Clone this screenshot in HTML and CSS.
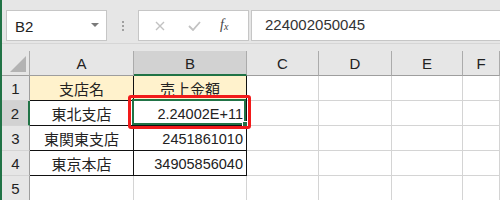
FILE: index.html
```html
<!DOCTYPE html>
<html lang="ja">
<head>
    <meta charset="UTF-8">
    <title>売上金額</title>
    <link rel="stylesheet" href="styles.css">
</head>
<body>
    <div class="app">
        <div class="toolbar">
            <div class="name-box">
                <span>B2</span>
                <span class="caret"></span>
            </div>
            <div class="grip">
                <span></span><span></span><span></span>
            </div>
            <div class="fx-buttons">
                <svg class="btn-icon" width="10" height="10" viewBox="0 0 10 10">
                    <path d="M1 1 L9 9 M9 1 L1 9" stroke="#c2c2c2" stroke-width="1.4" fill="none"/>
                </svg>
                <svg class="btn-icon" width="13" height="10" viewBox="0 0 13 10">
                    <path d="M1 5 L5 9 L12 1" stroke="#c2c2c2" stroke-width="1.8" fill="none"/>
                </svg>
                <span class="fx">f<sub>x</sub></span>
            </div>
            <div class="formula">224002050045</div>
        </div>
        <div class="spacer"></div>

        <div class="sheet">
            <div class="hd corner"><span class="tri"></span></div>
            <div class="hd col">A</div>
            <div class="hd col sel-col">B</div>
            <div class="hd col">C</div>
            <div class="hd col">D</div>
            <div class="hd col">E</div>
            <div class="hd col">F</div>

            <div class="hd row">1</div>
            <div class="cell tb head-cell">支店名</div>
            <div class="cell tb tb-r head-cell">売上金額</div>
            <div class="cell"></div><div class="cell"></div><div class="cell"></div><div class="cell"></div>

            <div class="hd row sel-row">2</div>
            <div class="cell tb">東北支店</div>
            <div class="cell tb tb-r num active">
                2.24002E+11
                <span class="selection"><span class="handle"></span></span>
                <span class="callout"></span>
            </div>
            <div class="cell"></div><div class="cell"></div><div class="cell"></div><div class="cell"></div>

            <div class="hd row">3</div>
            <div class="cell tb">東関東支店</div>
            <div class="cell tb tb-r num">2451861010</div>
            <div class="cell"></div><div class="cell"></div><div class="cell"></div><div class="cell"></div>

            <div class="hd row">4</div>
            <div class="cell tb">東京本店</div>
            <div class="cell tb tb-r num">34905856040</div>
            <div class="cell"></div><div class="cell"></div><div class="cell"></div><div class="cell"></div>

            <div class="hd row">5</div>
            <div class="cell"></div><div class="cell"></div><div class="cell"></div>
            <div class="cell"></div><div class="cell"></div><div class="cell"></div>
        </div>
    </div>
</body>
</html>
```

FILE: styles.css
```css
* {
    box-sizing: border-box;
}

body {
    margin: 0;
    padding: 0;
    font-family: "Liberation Sans", "Noto Sans CJK JP", sans-serif;
    color: #222;
    overflow: hidden;
}

.app {
    width: 500px;
    height: 200px;
    background: #e6e6e6;
    border-left: 2px solid #217346;
    overflow: hidden;
}

/* Formula bar */
.toolbar {
    height: 44px;
    display: flex;
    align-items: flex-start;
    padding: 10px 0 0 4px;
    border-bottom: 1px solid #d6d6d6;
}

.name-box {
    width: 101px;
    height: 31px;
    background: #fff;
    border: 1px solid #c6c6c6;
    display: flex;
    align-items: center;
    justify-content: space-between;
    padding: 2px 7px 0 8px;
    font-size: 15px;
}

.caret {
    width: 0;
    height: 0;
    border-left: 4px solid transparent;
    border-right: 4px solid transparent;
    border-top: 4px solid #7a7a7a;
    margin-top: -3px;
}

.grip {
    width: 31px;
    height: 31px;
    display: flex;
    flex-direction: column;
    align-items: center;
    justify-content: center;
    gap: 2px;
}

.grip span {
    width: 2px;
    height: 2px;
    background: #a0a0a0;
}

.fx-buttons {
    width: 111px;
    height: 31px;
    background: #fff;
    border: 1px solid #c6c6c6;
    display: flex;
    align-items: center;
    padding: 1px 0 0 16px;
}

.btn-icon {
    display: block;
}

.btn-icon + .btn-icon {
    margin-left: 23px;
}

.fx {
    margin-left: 19px;
    font-family: "Liberation Serif", serif;
    font-style: italic;
    font-size: 14px;
    color: #444;
    margin-top: -2px;
}

.fx sub {
    font-size: 10px;
    vertical-align: -1px;
}

.formula {
    flex: 1;
    margin-left: 2px;
    height: 31px;
    background: #fff;
    border: 1px solid #c6c6c6;
    border-right: none;
    padding: 5px 0 0 13px;
    font-size: 15px;
    color: #333;
}

.spacer {
    height: 7px;
}

/* Sheet grid */
.sheet {
    display: grid;
    grid-template-columns: 28px 104px 113px 72px 73px 71px 1fr;
    grid-auto-rows: 25px;
    background: #fff;
}

.hd {
    background: #e6e6e6;
    display: flex;
    align-items: center;
    justify-content: center;
    font-size: 15px;
    color: #222;
    border-right: 1px solid #ababab;
    border-bottom: 1px solid #d4d4d4;
}

.hd.col {
    border-bottom: 1px solid #9e9e9e;
    padding-top: 1px;
}

.hd.corner {
    position: relative;
    border-bottom: 1px solid #9e9e9e;
}

.tri {
    position: absolute;
    right: 3px;
    bottom: 3px;
    width: 0;
    height: 0;
    border-left: 16px solid transparent;
    border-bottom: 16px solid #b3b3b3;
}

.sel-col {
    background: #d2d2d2;
    border-bottom: 2px solid #217346 !important;
}

.hd.row {
    border-right: 1px solid #9e9e9e;
    padding-top: 1px;
}

.sel-row {
    background: #d2d2d2;
    border-right: 2px solid #217346 !important;
}

.cell {
    border-right: 1px solid #d4d4d4;
    border-bottom: 1px solid #d4d4d4;
    font-size: 15px;
    display: flex;
    align-items: center;
    justify-content: center;
    padding-top: 1px;
    white-space: nowrap;
}

.cell.tb {
    border-right-color: #111;
    border-bottom-color: #111;
}

.head-cell {
    background: #fff2cc;
}

.num {
    justify-content: flex-end;
    padding-right: 3px;
    font-size: 14.5px;
}

.active {
    position: relative;
}

.selection {
    position: absolute;
    left: -2px;
    top: -2px;
    right: 0;
    bottom: 0;
    border: 2px solid #217346;
}

.handle {
    position: absolute;
    right: -4px;
    bottom: -4px;
    width: 6px;
    height: 6px;
    background: #217346;
    border: 1px solid #fff;
}

.callout {
    position: absolute;
    left: -6px;
    top: -6px;
    right: -5px;
    bottom: -4px;
    border: 3px solid #f21a1a;
    border-radius: 3px;
}
```
